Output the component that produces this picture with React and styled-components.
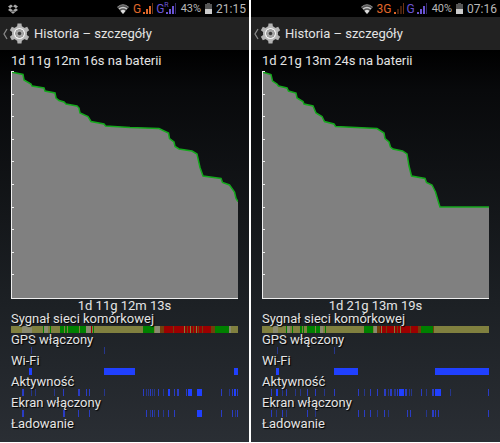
import React from 'react';
import styled, { createGlobalStyle } from 'styled-components';

const GlobalStyle = createGlobalStyle`
  * {
    box-sizing: border-box;
  }
  body {
    margin: 0;
    background: #fff;
    font-family: Roboto, 'Noto Sans', sans-serif;
  }
`;

const Page = styled.main`
  display: grid;
  grid-template-columns: 1fr 1fr;
  gap: 2px;
  padding-bottom: 1px;
`;

const Screen = styled.section`
  min-width: 0;
  padding-bottom: 4px;
  background: linear-gradient(#000 50px, #08090b 90px, #1c2024 300px, #2a2e34);
  color: #e4e4e4;
`;

const StatusBar = styled.div`
  display: flex;
  align-items: center;
  height: 17px;
  padding: 0 3px 0 8px;
  background: #000;
  color: #b8b8b8;
  font-size: 12px;
  line-height: 16px;
`;

const StatusRight = styled.div`
  display: flex;
  align-items: center;
  gap: 4px;
  margin-left: auto;
`;

const Networks = styled.div`
  display: flex;
  align-items: center;
  gap: 2px;
`;

const Network = styled.span`
  display: flex;
  align-items: center;
  gap: 2px;
  color: ${({ $color }) => $color};
`;

const Roaming = styled.sup`
  align-self: flex-start;
  margin: 0 -5px 0 -2px;
  font-size: 7px;
  line-height: 8px;
`;

const Percent = styled.span`
  font-size: 11px;
`;

const TitleBar = styled.header`
  display: flex;
  align-items: center;
  height: 33px;
  padding-left: 2px;
  background: #222;
`;

const BackButton = styled.button`
  display: flex;
  align-items: center;
  padding: 0;
  border: none;
  background: none;
`;

const Title = styled.h1`
  margin: 0 0 0 4px;
  font-size: 13px;
  font-weight: 400;
  line-height: 20px;
`;

const Content = styled.div`
  padding: 0 11px;
  font-size: 13px;
`;

const Summary = styled.h2`
  margin: 0;
  font-size: 13px;
  font-weight: 400;
  line-height: 21px;
`;

const Chart = styled.svg`
  display: block;
  width: 100%;
  height: 228px;
`;

const Duration = styled.p`
  margin: 0;
  line-height: 13px;
  text-align: center;
`;

const Row = styled.div`
  line-height: 14px;
`;

const RowLabel = styled.div`
  position: relative;
  white-space: nowrap;
  text-shadow: 1px 1px 1px #000;
`;

const Track = styled.svg`
  display: block;
  width: 100%;
  height: 7px;
`;

const COLORS = {
  olive: '#80803f',
  gray: '#8a8a70',
  green: '#008000',
  red: '#9c0000',
  brown: '#70400c',
  blue: '#2040ff',
  dim: '#26368c',
  mid: '#2a3cc4',
};

const SCREENS = [
  {
    id: 'first',
    roaming: true,
    network: 'G',
    bars: 3,
    battery: '43%',
    time: '21:15',
    dropbox: true,
    summary: '1d 11g 12m 16s na baterii',
    duration: '1d 11g 12m 13s',
    curve:
      '0,1 12,3.5 13,9 20,13 21,15 33,17 34,20 44,22 45,27 48,29.5 53,31 55,33 66,35 68,37 69,42 77,45.5 80,50.5 93,53 94.5,55 119,56.5 148,57.5 157.5,62 158.5,67.5 163,71 164,75.5 168,78 181,80 186,83 189,96.5 192,105 210,107.5 211.5,111.5 218.5,114 223.5,121 225,127.5 227,130.5',
    signal: [
      ['olive', 0, 227], ['gray', 11, 10], ['green', 32, 1], ['gray', 33, 4], ['green', 39, 1],
      ['green', 49, 4], ['green', 54, 2], ['green', 57, 11], ['green', 69, 6], ['gray', 75, 5],
      ['red', 80, 1], ['green', 82, 1], ['green', 132, 11], ['gray', 144, 5], ['brown', 149, 4],
      ['red', 153, 47], ['brown', 162, 1], ['olive', 173, 1], ['brown', 176, 1], ['olive', 179, 1],
      ['brown', 182, 1], ['olive', 185, 1], ['brown', 187, 1], ['brown', 191, 1], ['brown', 200, 4],
      ['green', 204, 14], ['gray', 218, 2],
    ],
    gps: [['dim', 20, 1], ['dim', 93, 1]],
    wifi: [['blue', 18, 3], ['blue', 93, 31], ['blue', 223, 4]],
    activity: [
      ['mid', 11, 2], ['dim', 20, 1], ['dim', 24, 1], ['dim', 43, 1], ['mid', 52, 1], ['mid', 67, 2],
      ['mid', 75, 1], ['mid', 78, 1], ['dim', 93, 1], ['mid', 132, 1], ['dim', 135, 1], ['dim', 137, 1],
      ['mid', 139, 1], ['dim', 141, 1], ['dim', 143, 1], ['mid', 147, 1], ['dim', 152, 1], ['blue', 157, 2],
      ['mid', 163, 1], ['mid', 166, 2], ['mid', 175, 1], ['blue', 177, 4], ['blue', 186, 5],
      ['mid', 210, 1], ['dim', 218, 1], ['mid', 221, 1], ['blue', 223, 2], ['mid', 226, 1],
    ],
    screenOn: [
      ['mid', 11, 2], ['mid', 52, 2], ['mid', 67, 1], ['mid', 78, 1], ['mid', 135, 1], ['dim', 139, 1],
      ['mid', 141, 1], ['dim', 143, 1], ['mid', 147, 1], ['dim', 152, 1], ['mid', 157, 1], ['mid', 163, 1],
      ['blue', 186, 5], ['mid', 210, 1], ['mid', 221, 1], ['dim', 224, 1], ['mid', 226, 1],
    ],
  },
  {
    id: 'second',
    network: '3G',
    bars: 1,
    battery: '40%',
    time: '07:16',
    summary: '1d 21g 13m 24s na baterii',
    duration: '1d 21g 13m 19s',
    curve:
      '0,1 9,3.5 10.5,10 15,13 16.5,15 25,17 26.5,20 34,22 35,27 41,30.5 42,33 51,35 54,42 60,45.5 62.5,50.5 72,53 73.5,55.5 115,57.5 122,62 123,67.5 127,71 128.5,76 131,78 140.5,80 145,83 147,95 149.5,105 163,107.5 164.5,111.5 170,114 173.5,121 176,129.5 178,136 227,136',
    signal: [
      ['olive', 0, 227], ['gray', 11, 5], ['green', 24, 1], ['gray', 25, 3], ['green', 30, 1],
      ['green', 38, 2], ['green', 41, 1], ['green', 45, 8], ['green', 54, 4], ['gray', 58, 3],
      ['green', 63, 1], ['green', 102, 9], ['gray', 112, 3], ['brown', 115, 3], ['red', 118, 40],
      ['olive', 119, 1], ['brown', 124, 1], ['olive', 132, 1], ['brown', 135, 1], ['olive', 138, 1],
      ['brown', 148, 1], ['brown', 156, 3], ['green', 159, 12], ['brown', 171, 1],
    ],
    gps: [['dim', 15, 1], ['dim', 72, 1]],
    wifi: [['blue', 14, 3], ['blue', 72, 24], ['blue', 173, 54]],
    activity: [
      ['mid', 9, 1], ['blue', 14, 2], ['dim', 20, 1], ['mid', 24, 1], ['dim', 33, 1], ['dim', 38, 1],
      ['mid', 45, 1], ['mid', 53, 1], ['dim', 62, 1], ['mid', 72, 1], ['mid', 96, 1], ['dim', 102, 1],
      ['mid', 108, 1], ['mid', 115, 1], ['mid', 122, 2], ['dim', 126, 1], ['mid', 128, 2], ['dim', 132, 2],
      ['mid', 135, 1], ['blue', 137, 5], ['mid', 143, 2], ['dim', 147, 1], ['dim', 149, 1], ['mid', 159, 1],
      ['dim', 164, 1], ['mid', 170, 2], ['blue', 173, 6], ['dim', 188, 1], ['mid', 226, 1],
    ],
    screenOn: [
      ['mid', 9, 1], ['dim', 14, 1], ['mid', 20, 1], ['dim', 24, 1], ['mid', 45, 1], ['dim', 53, 1],
      ['mid', 96, 1], ['mid', 102, 1], ['mid', 108, 1], ['dim', 115, 1], ['mid', 122, 1], ['dim', 126, 1],
      ['mid', 145, 1], ['mid', 148, 1], ['dim', 164, 1], ['mid', 170, 2], ['mid', 173, 1], ['mid', 176, 1],
      ['mid', 226, 1],
    ],
  },
];

const DropboxIcon = () => (
  <svg width="10" height="10" viewBox="0 0 20 20" fill="#a8a8a8" aria-hidden="true">
    <path d="M6 1 0 5l4 3.500 6-4zM14 1l6 4-4 3.500-6-4zM4 8.500 0 12l6 4 4-3.500zM16 8.500l4 3.500-6 4-4-3.500zM10 14l4 3-4 2.500L6 17z" />
  </svg>
);

const WifiIcon = () => (
  <svg width="12" height="10" viewBox="0 0 24 20" aria-hidden="true">
    <path d="M0 6Q12-4 24 6L12 20z" fill="#555" />
    <path d="M1 6Q12-3 23 6" fill="none" stroke="#888" strokeWidth="2" />
    <path d="M4 10Q12 4 20 10" fill="none" stroke="#ccc" strokeWidth="3" />
    <path d="M7 14Q12 9 17 14L12 20z" fill="#ddd" />
  </svg>
);

const SignalIcon = ({ bars = 3 }) => (
  <svg width="11" height="11" viewBox="0 0 11 11" fill="currentColor" aria-hidden="true">
    <rect x="0" y="9" width="2" height="2" />
    <rect x="3" y="6" width="2" height="5" opacity={bars > 1 ? 1 : 0.3} />
    <rect x="6" y="3" width="2" height="8" opacity={bars > 2 ? 1 : 0.3} />
    <rect x="9" y="0" width="1" height="11" opacity="0.5" />
  </svg>
);

const BatteryIcon = () => (
  <svg width="7" height="11" viewBox="0 0 7 11" aria-hidden="true">
    <path d="M2 0h3v1h2v5H0V1h2z" fill="#555" />
    <path d="M0 6h7v5H0z" fill="#ccc" />
  </svg>
);

const BackIcon = () => (
  <svg width="7" height="12" viewBox="0 0 7 12" fill="none" aria-hidden="true">
    <path d="M5 1 2 6l3 5" stroke="#888" strokeWidth="1.300" />
  </svg>
);

const GearIcon = () => (
  <svg width="21" height="21" viewBox="-21 -21 42 42" aria-hidden="true">
    {[0, 60, 120, 180, 240, 300].map((angle) => (
      <path key={angle} d="M-5-12-4-20H4L5-12z" fill="#b4b4b4" transform={`rotate(${angle})`} />
    ))}
    <circle r="12" fill="none" stroke="#b8b8b8" strokeWidth="6" />
    <circle r="9.500" fill="none" stroke="#f4f4f4" strokeWidth="3" />
    <circle r="8" fill="#a4a4a4" />
    <circle r="3.500" fill="#383838" />
  </svg>
);

const BatteryChart = ({ curve, label }) => (
  <Chart viewBox="0 0 227 228" preserveAspectRatio="none" role="img" aria-label={label}>
    <polygon points={`0,227 ${curve} 227,227`} fill="#808080" />
    <polyline points={curve} fill="none" stroke="#14a81c" strokeWidth="1.500" />
    <rect x="0" y="0" width="1" height="228" fill="#eee" />
    <rect x="0" y="227" width="227" height="1" fill="#eee" />
    {[...Array(10).keys()].map((i) => (
      <rect key={i} x="0" y={Math.round(i * 22.6)} width="3" height="1" fill="#eee" />
    ))}
  </Chart>
);

const HistoryRow = ({ label, segments = [] }) => (
  <Row>
    <RowLabel>{label}</RowLabel>
    <Track viewBox="0 0 227 7" preserveAspectRatio="none" aria-hidden="true">
      {segments.map(([color, x, width], i) => (
        <rect key={`segment-${i}`} x={x} y="0" width={width} height="7" fill={COLORS[color]} />
      ))}
    </Track>
  </Row>
);

const HistoryScreen = ({ data }) => (
  <Screen>
    <StatusBar>
      {data.dropbox && <DropboxIcon />}
      <StatusRight>
        <WifiIcon />
        <Networks>
          <Network $color="#e0682a">
            {data.network}
            <SignalIcon bars={data.bars} />
          </Network>
          <Network $color="#6a54d4">
            G
            {data.roaming && <Roaming>R</Roaming>}
            <SignalIcon />
          </Network>
        </Networks>
        <Percent>{data.battery}</Percent>
        <BatteryIcon />
        <time>{data.time}</time>
      </StatusRight>
    </StatusBar>
    <TitleBar>
      <BackButton type="button" aria-label="Wstecz">
        <BackIcon />
        <GearIcon />
      </BackButton>
      <Title>Historia – szczegóły</Title>
    </TitleBar>
    <Content>
      <Summary>{data.summary}</Summary>
      <BatteryChart curve={data.curve} label={data.summary} />
      <Duration>{data.duration}</Duration>
      <HistoryRow label="Sygnał sieci komórkowej" segments={data.signal} />
      <HistoryRow label="GPS włączony" segments={data.gps} />
      <HistoryRow label="Wi-Fi" segments={data.wifi} />
      <HistoryRow label="Aktywność" segments={data.activity} />
      <HistoryRow label="Ekran włączony" segments={data.screenOn} />
      <HistoryRow label="Ładowanie" />
    </Content>
  </Screen>
);

export default function App() {
  return (
    <>
      <GlobalStyle />
      <Page>
        {SCREENS.map((data) => (
          <HistoryScreen key={data.id} data={data} />
        ))}
      </Page>
    </>
  );
}
